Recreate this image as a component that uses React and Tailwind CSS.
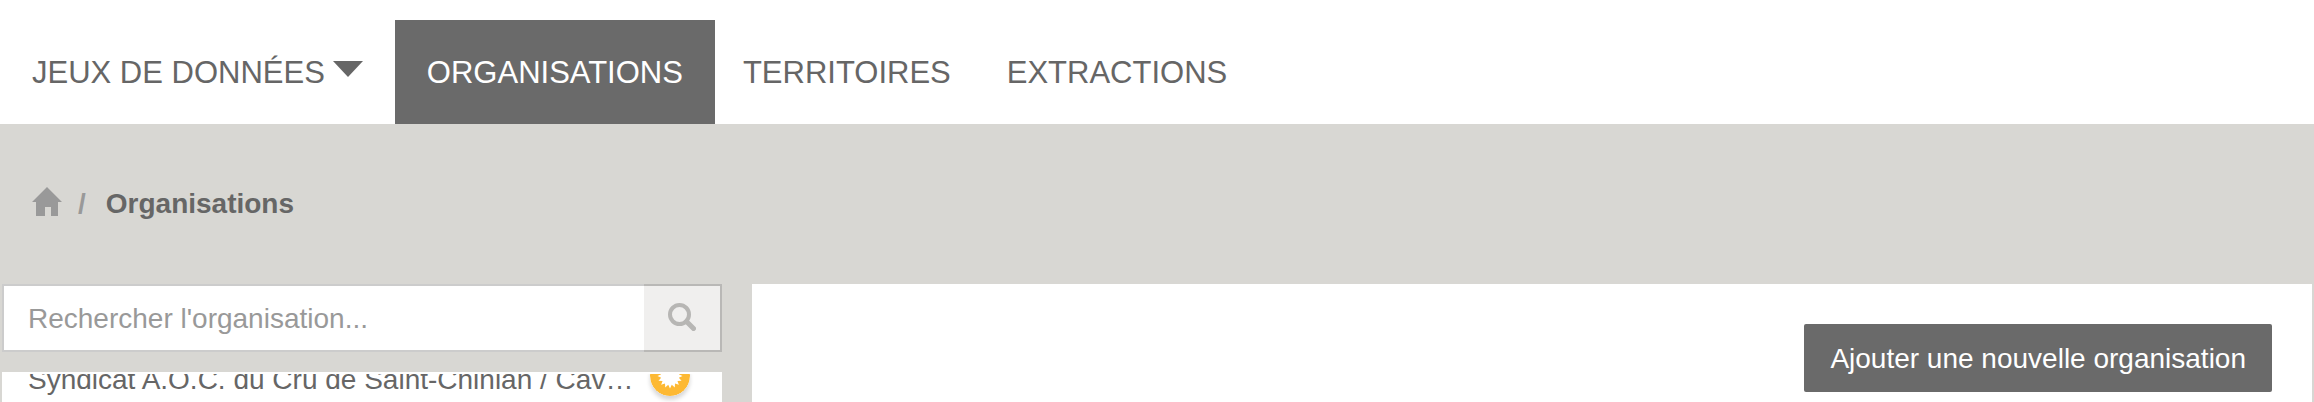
import React from "react";

const navLinks = [
  { label: "ORGANISATIONS", active: true },
  { label: "TERRITOIRES" },
  { label: "EXTRACTIONS" },
];

const burst = Array.from({ length: 32 }, (_, i) => {
  const r = i % 2 ? 9 : 12.5;
  const a = (i * Math.PI) / 16 + Math.PI / 2;
  return `${(20 + r * Math.cos(a)).toFixed(2)},${(20 + r * Math.sin(a)).toFixed(2)}`;
}).join(" ");

function HomeIcon() {
  return (
    <svg width="30" height="29" viewBox="0 0 30 29" fill="#999999" aria-hidden="true">
      <path d="M15 0 L30 15 H26 V29 H19 V20 H13 V29 H4 V15 H0 Z" />
    </svg>
  );
}

function SearchIcon() {
  return (
    <svg width="28" height="28" viewBox="0 0 28 28" fill="none" stroke="#b7b6b4" aria-hidden="true">
      <circle cx="11.5" cy="11.5" r="9.5" strokeWidth="4" />
      <path d="M18.5 18.5 L25.5 25.5" strokeWidth="5" strokeLinecap="round" />
    </svg>
  );
}

function Badge() {
  return (
    <svg width="40" height="40" viewBox="0 0 40 40" className="shrink-0 rounded-full shadow-[0_4px_4px_rgba(0,0,0,0.16)]" aria-hidden="true">
      <circle cx="20" cy="20" r="20" fill="#fdb933" />
      <polygon points={burst} fill="#ffffff" />
    </svg>
  );
}

export default function App() {
  return (
    <div className="flex h-screen flex-col overflow-hidden bg-[#d8d7d3] font-['Liberation_Sans',Arial,sans-serif] text-[28px] leading-10 text-[#666666]">
      <nav className="flex bg-white pt-5 text-[31px]">
        <button type="button" className="flex h-26 items-center gap-2 pt-0.5 pr-8 pl-8">
          JEUX DE DONNÉES
          <svg width="30" height="16" viewBox="0 0 30 16" fill="#666666" className="mb-2" aria-hidden="true">
            <path d="M0 0 H30 L15 16 Z" />
          </svg>
        </button>
        {navLinks.map(({ label, active }) => (
          <a
            key={label}
            href="#"
            className={
              active
                ? "flex h-26 items-center bg-[#6a6a6a] px-8 pt-0.5 text-white"
                : "flex h-26 items-center px-7 pt-0.5"
            }
          >
            {label}
          </a>
        ))}
      </nav>

      <div className="flex h-40 items-center px-8" aria-label="Fil d'Ariane">
        <a href="#" aria-label="Accueil" className="pb-1.5">
          <HomeIcon />
        </a>
        <span className="pr-5 pl-4 font-bold text-[#999999]">/</span>
        <span className="font-bold">Organisations</span>
      </div>

      <div className="flex min-h-0 flex-1 gap-[30px] px-0.5">
        <aside className="flex w-[720px] shrink-0 flex-col gap-5">
          <form className="flex h-17 shrink-0">
            <input
              type="text"
              aria-label="Rechercher l'organisation"
              placeholder="Rechercher l'organisation..."
              className="min-w-0 flex-1 border-2 border-r-0 border-[#cccccc] bg-white px-6 pt-0.5 outline-none placeholder:text-[#999999]"
            />
            <button
              type="button"
              aria-label="Rechercher"
              className="flex w-[78px] items-center justify-center border-2 border-l-0 border-[#b9b8b6] bg-[#f0efee] pb-0.5"
            >
              <SearchIcon />
            </button>
          </form>
          <ul className="min-h-0 flex-1 overflow-hidden border-t-2 border-white bg-white">
            <li className="-mt-[18px] flex items-start gap-3 pr-8 pl-[26px]">
              <a href="#" className="min-w-0 flex-1 truncate pt-1">
                Syndicat A.O.C. du Cru de Saint-Chinian / Caveau de Saint-Chinian
              </a>
              <Badge />
            </li>
          </ul>
        </aside>
        <main className="flex min-w-0 flex-1 items-start justify-end bg-white p-10">
          <button type="button" className="h-17 rounded-xs bg-[#6a6a6a] px-[26px] pt-0.5 text-white">
            Ajouter une nouvelle organisation
          </button>
        </main>
      </div>
    </div>
  );
}
